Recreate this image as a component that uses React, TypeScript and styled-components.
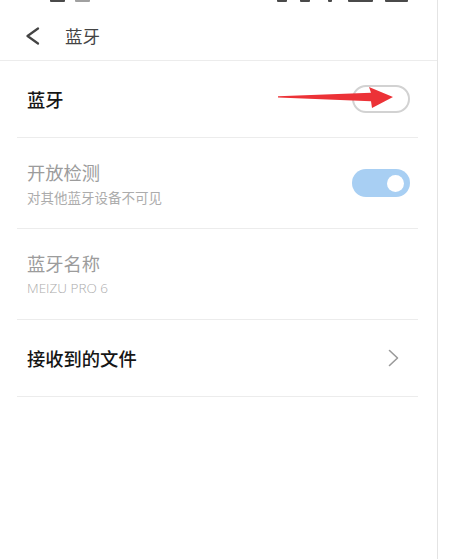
import React from "react";
import styled, { createGlobalStyle } from "styled-components";

const GlobalStyle = createGlobalStyle`
  html, body { margin: 0; padding: 0; background: #ffffff; }
  body { font-family: "Noto Sans CJK SC", "Noto Sans", Roboto, sans-serif; }
  * { box-sizing: border-box; }
`;

const Page = styled.div`
  position: relative;
  width: 438px;
  height: 559px;
  background: #ffffff;
  border-right: 1px solid #e4e4e4;
  display: flex;
  flex-direction: column;
  overflow: hidden;
`;

const StatusBar = styled.div`
  height: 3px;
  display: flex;
  justify-content: space-between;
  align-items: flex-start;
  padding: 0 29px 0 50px;
  overflow: hidden;
`;

const StatusGroup = styled.div`
  display: flex;
  align-items: flex-start;
`;

const StatusPiece = styled.div<{ $w: number; $ml?: number; $c?: string }>`
  width: ${(p) => p.$w}px;
  height: 2px;
  margin-left: ${(p) => p.$ml ?? 0}px;
  background: ${(p) => p.$c ?? "#4a4a4a"};
  border-radius: 0 0 1px 1px;
`;

const Header = styled.header`
  height: 58px;
  padding: 9px 0 0 25px;
  display: flex;
  align-items: center;
  gap: 25px;
  border-bottom: 1px solid #ececec;
`;

const BackIcon = styled.svg`
  width: 15px;
  height: 18px;
  display: block;
`;

const HeaderTitle = styled.h1`
  margin: 0;
  font-size: 17.5px;
  font-weight: 400;
  color: #444444;
  line-height: 24px;
`;

const List = styled.div`
  display: flex;
  flex-direction: column;
  padding: 0 19px 0 17px;
`;

const Row = styled.div<{ $h: number }>`
  height: ${(p) => p.$h}px;
  display: flex;
  align-items: center;
  justify-content: space-between;
  padding: 0 8px 0 10px;
  border-bottom: 1px solid #ececec;
`;

const TextBlock = styled.div`
  display: flex;
  flex-direction: column;
`;

const Title = styled.div<{ $disabled?: boolean }>`
  font-size: 18.3px;
  line-height: 24px;
  font-weight: ${(p) => (p.$disabled ? 400 : 500)};
  color: ${(p) => (p.$disabled ? "#9c9c9c" : "#161616")};
`;

const Subtitle = styled.div<{ $latin?: boolean }>`
  margin-top: 4px;
  font-size: 13.5px;
  line-height: 18px;
  color: #acacac;
  font-family: ${(p) =>
    p.$latin
      ? `"Open Sans", "Noto Sans", sans-serif`
      : `"Noto Sans CJK SC", sans-serif`};
  font-weight: ${(p) => (p.$latin ? 300 : 400)};
`;

const Switch = styled.div<{ $on?: boolean }>`
  width: 58px;
  height: 28px;
  border-radius: 14px;
  display: flex;
  align-items: center;
  justify-content: ${(p) => (p.$on ? "flex-end" : "flex-start")};
  padding: 0 6px;
  background: ${(p) => (p.$on ? "#a8cff3" : "#ffffff")};
  border: ${(p) => (p.$on ? "none" : "2px solid #d2d2d2")};
`;

const Knob = styled.div`
  width: 17px;
  height: 17px;
  border-radius: 50%;
  background: #ffffff;
`;

const ChevronIcon = styled.svg`
  width: 11px;
  height: 18px;
  display: block;
  margin-right: 11px;
`;

const ArrowMark = styled.svg`
  position: absolute;
  left: 270px;
  top: 80px;
  width: 130px;
  height: 35px;
  pointer-events: none;
`;

export default function App() {
  return (
    <>
      <GlobalStyle />
      <Page>
        <StatusBar>
          <StatusGroup>
            <StatusPiece $w={15} />
            <StatusPiece $w={15} $ml={10} $c="#a0a0a0" />
          </StatusGroup>
          <StatusGroup>
            <StatusPiece $w={10} />
            <StatusPiece $w={10} $ml={13} />
            <StatusPiece $w={4} $ml={18} />
            <StatusPiece $w={25} $ml={16} />
            <StatusPiece $w={23} $ml={12} />
          </StatusGroup>
        </StatusBar>
        <Header>
          <BackIcon viewBox="0 0 15 18">
            <polyline
              points="13,1.5 2.5,9 13,16.5"
              fill="none"
              stroke="#444"
              strokeWidth="2.2"
              strokeLinecap="round"
              strokeLinejoin="round"
            />
          </BackIcon>
          <HeaderTitle>蓝牙</HeaderTitle>
        </Header>
        <List>
          <Row $h={77}>
            <Title>蓝牙</Title>
            <Switch />
          </Row>
          <Row $h={91}>
            <TextBlock>
              <Title $disabled>开放检测</Title>
              <Subtitle>对其他蓝牙设备不可见</Subtitle>
            </TextBlock>
            <Switch $on>
              <Knob />
            </Switch>
          </Row>
          <Row $h={91}>
            <TextBlock>
              <Title $disabled>蓝牙名称</Title>
              <Subtitle $latin>MEIZU PRO 6</Subtitle>
            </TextBlock>
          </Row>
          <Row $h={77}>
            <Title>接收到的文件</Title>
            <ChevronIcon viewBox="0 0 11 18">
              <polyline
                points="1.5,1.5 9.5,9 1.5,16.5"
                fill="none"
                stroke="#9a9a9a"
                strokeWidth="1.6"
                strokeLinecap="round"
                strokeLinejoin="round"
              />
            </ChevronIcon>
          </Row>
        </List>
        <ArrowMark viewBox="0 0 130 35">
          <polygon
            points="8,16.2 101,12.8 99,7 123,17 102,28 101,21.2 8,17.4"
            fill="#ec3237"
          />
        </ArrowMark>
      </Page>
    </>
  );
}
